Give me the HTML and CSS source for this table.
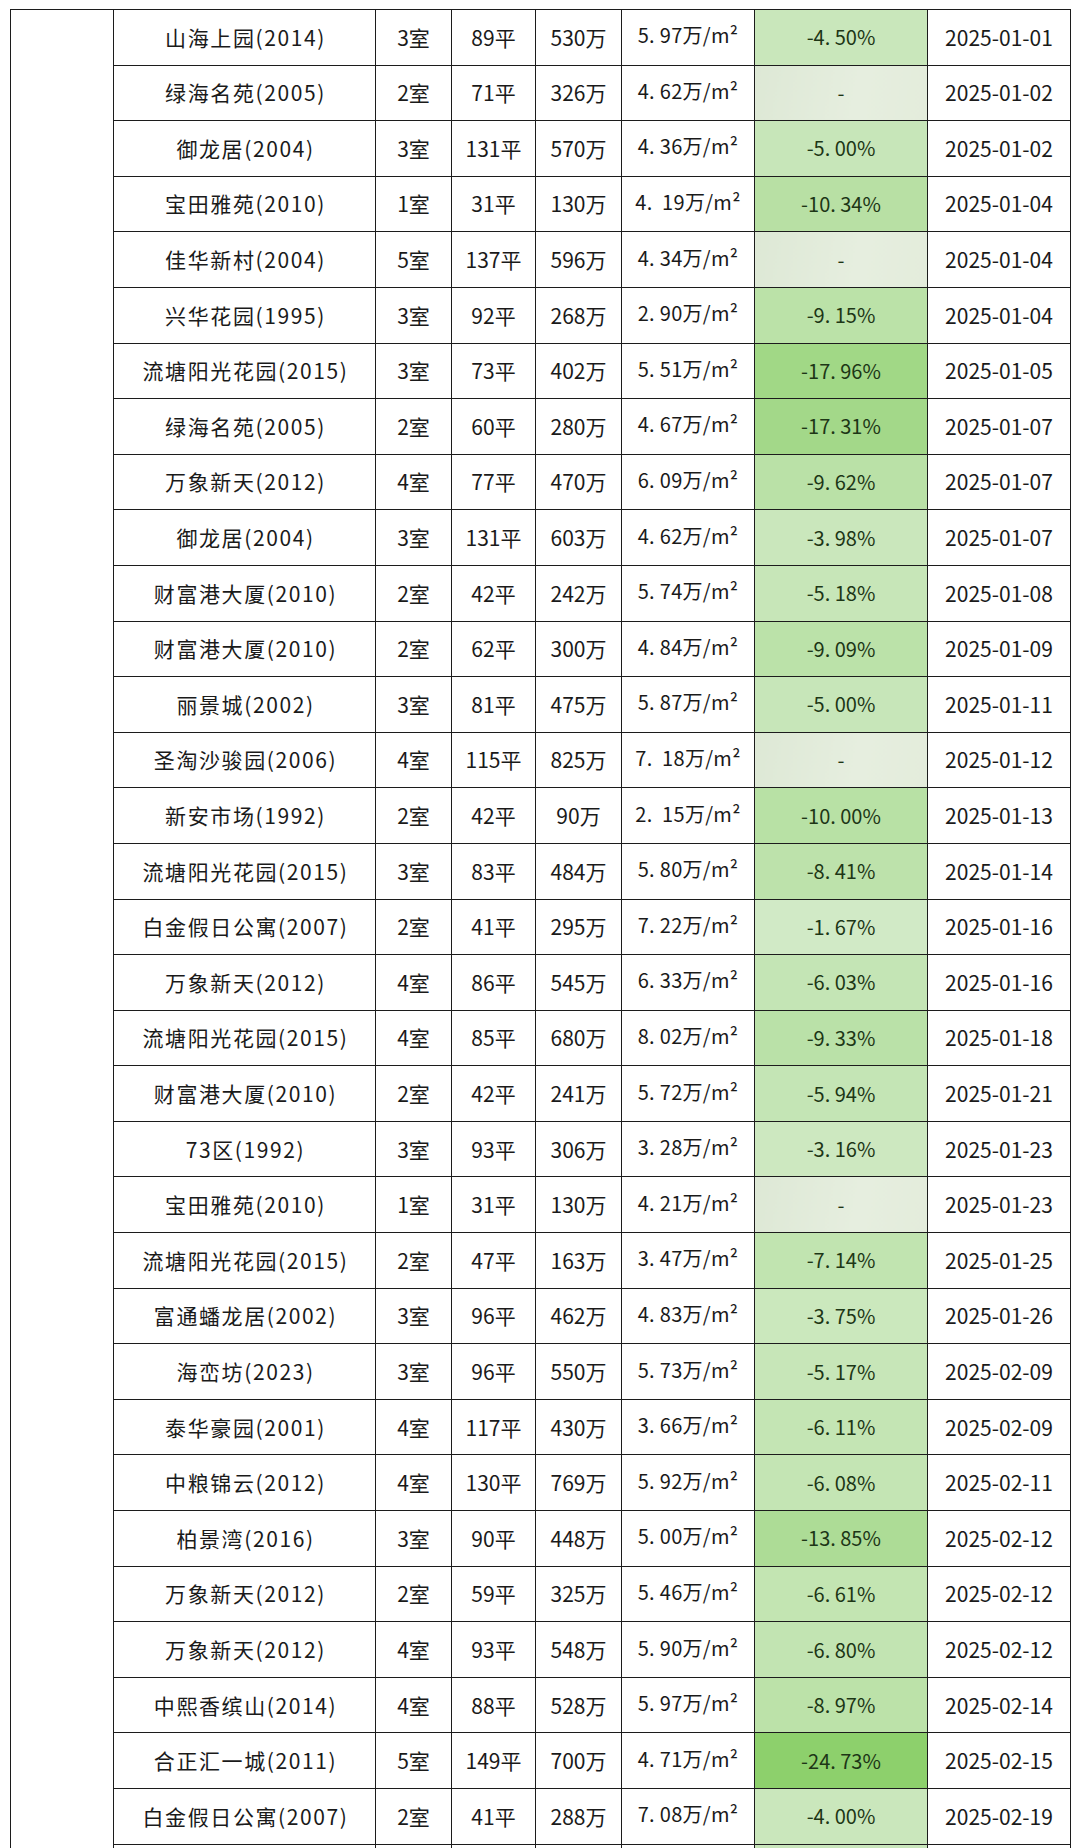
FILE: index.html
```html
<!DOCTYPE html>
<html lang="zh-CN">
<head>
<meta charset="utf-8">
<title>成交记录</title>
<link rel="stylesheet" href="styles.css">
</head>
<body>
<div class="page">
<table class="deals">
<colgroup>
<col class="c-side"><col class="c-name"><col class="c-room"><col class="c-area"><col class="c-price"><col class="c-unit"><col class="c-chg"><col class="c-date">
</colgroup>
<tbody>
<tr><td class="side" rowspan="34"></td><td class="name">山海上园(2014)</td><td>3室</td><td>89平</td><td>530万</td><td class="unit">5. 97万/m²</td><td class="chg" style="background:rgb(201,231,187)">-4. 50%</td><td>2025-01-01</td></tr>
<tr><td class="name">绿海名苑(2005)</td><td>2室</td><td>71平</td><td>326万</td><td class="unit">4. 62万/m²</td><td class="chg na">-</td><td>2025-01-02</td></tr>
<tr><td class="name">御龙居(2004)</td><td>3室</td><td>131平</td><td>570万</td><td class="unit">4. 36万/m²</td><td class="chg" style="background:rgb(199,230,185)">-5. 00%</td><td>2025-01-02</td></tr>
<tr><td class="name">宝田雅苑(2010)</td><td>1室</td><td>31平</td><td>130万</td><td class="unit">4.&nbsp; 19万/m²</td><td class="chg" style="background:rgb(184,224,164)">-10. 34%</td><td>2025-01-04</td></tr>
<tr><td class="name">佳华新村(2004)</td><td>5室</td><td>137平</td><td>596万</td><td class="unit">4. 34万/m²</td><td class="chg na">-</td><td>2025-01-04</td></tr>
<tr><td class="name">兴华花园(1995)</td><td>3室</td><td>92平</td><td>268万</td><td class="unit">2. 90万/m²</td><td class="chg" style="background:rgb(187,226,168)">-9. 15%</td><td>2025-01-04</td></tr>
<tr><td class="name">流塘阳光花园(2015)</td><td>3室</td><td>73平</td><td>402万</td><td class="unit">5. 51万/m²</td><td class="chg" style="background:rgb(161,216,134)">-17. 96%</td><td>2025-01-05</td></tr>
<tr><td class="name">绿海名苑(2005)</td><td>2室</td><td>60平</td><td>280万</td><td class="unit">4. 67万/m²</td><td class="chg" style="background:rgb(163,216,137)">-17. 31%</td><td>2025-01-07</td></tr>
<tr><td class="name">万象新天(2012)</td><td>4室</td><td>77平</td><td>470万</td><td class="unit">6. 09万/m²</td><td class="chg" style="background:rgb(186,225,167)">-9. 62%</td><td>2025-01-07</td></tr>
<tr><td class="name">御龙居(2004)</td><td>3室</td><td>131平</td><td>603万</td><td class="unit">4. 62万/m²</td><td class="chg" style="background:rgb(202,231,188)">-3. 98%</td><td>2025-01-07</td></tr>
<tr><td class="name">财富港大厦(2010)</td><td>2室</td><td>42平</td><td>242万</td><td class="unit">5. 74万/m²</td><td class="chg" style="background:rgb(199,230,184)">-5. 18%</td><td>2025-01-08</td></tr>
<tr><td class="name">财富港大厦(2010)</td><td>2室</td><td>62平</td><td>300万</td><td class="unit">4. 84万/m²</td><td class="chg" style="background:rgb(187,226,169)">-9. 09%</td><td>2025-01-09</td></tr>
<tr><td class="name">丽景城(2002)</td><td>3室</td><td>81平</td><td>475万</td><td class="unit">5. 87万/m²</td><td class="chg" style="background:rgb(199,230,185)">-5. 00%</td><td>2025-01-11</td></tr>
<tr><td class="name">圣淘沙骏园(2006)</td><td>4室</td><td>115平</td><td>825万</td><td class="unit">7.&nbsp; 18万/m²</td><td class="chg na">-</td><td>2025-01-12</td></tr>
<tr><td class="name">新安市场(1992)</td><td>2室</td><td>42平</td><td>90万</td><td class="unit">2.&nbsp; 15万/m²</td><td class="chg" style="background:rgb(184,225,165)">-10. 00%</td><td>2025-01-13</td></tr>
<tr><td class="name">流塘阳光花园(2015)</td><td>3室</td><td>83平</td><td>484万</td><td class="unit">5. 80万/m²</td><td class="chg" style="background:rgb(189,226,171)">-8. 41%</td><td>2025-01-14</td></tr>
<tr><td class="name">白金假日公寓(2007)</td><td>2室</td><td>41平</td><td>295万</td><td class="unit">7. 22万/m²</td><td class="chg" style="background:rgb(209,234,198)">-1. 67%</td><td>2025-01-16</td></tr>
<tr><td class="name">万象新天(2012)</td><td>4室</td><td>86平</td><td>545万</td><td class="unit">6. 33万/m²</td><td class="chg" style="background:rgb(196,229,181)">-6. 03%</td><td>2025-01-16</td></tr>
<tr><td class="name">流塘阳光花园(2015)</td><td>4室</td><td>85平</td><td>680万</td><td class="unit">8. 02万/m²</td><td class="chg" style="background:rgb(186,225,168)">-9. 33%</td><td>2025-01-18</td></tr>
<tr><td class="name">财富港大厦(2010)</td><td>2室</td><td>42平</td><td>241万</td><td class="unit">5. 72万/m²</td><td class="chg" style="background:rgb(196,229,181)">-5. 94%</td><td>2025-01-21</td></tr>
<tr><td class="name">73区(1992)</td><td>3室</td><td>93平</td><td>306万</td><td class="unit">3. 28万/m²</td><td class="chg" style="background:rgb(205,232,192)">-3. 16%</td><td>2025-01-23</td></tr>
<tr><td class="name">宝田雅苑(2010)</td><td>1室</td><td>31平</td><td>130万</td><td class="unit">4. 21万/m²</td><td class="chg na">-</td><td>2025-01-23</td></tr>
<tr><td class="name">流塘阳光花园(2015)</td><td>2室</td><td>47平</td><td>163万</td><td class="unit">3. 47万/m²</td><td class="chg" style="background:rgb(193,228,176)">-7. 14%</td><td>2025-01-25</td></tr>
<tr><td class="name">富通蟠龙居(2002)</td><td>3室</td><td>96平</td><td>462万</td><td class="unit">4. 83万/m²</td><td class="chg" style="background:rgb(203,232,189)">-3. 75%</td><td>2025-01-26</td></tr>
<tr><td class="name">海峦坊(2023)</td><td>3室</td><td>96平</td><td>550万</td><td class="unit">5. 73万/m²</td><td class="chg" style="background:rgb(199,230,184)">-5. 17%</td><td>2025-02-09</td></tr>
<tr><td class="name">泰华豪园(2001)</td><td>4室</td><td>117平</td><td>430万</td><td class="unit">3. 66万/m²</td><td class="chg" style="background:rgb(196,229,180)">-6. 11%</td><td>2025-02-09</td></tr>
<tr><td class="name">中粮锦云(2012)</td><td>4室</td><td>130平</td><td>769万</td><td class="unit">5. 92万/m²</td><td class="chg" style="background:rgb(196,229,180)">-6. 08%</td><td>2025-02-11</td></tr>
<tr><td class="name">柏景湾(2016)</td><td>3室</td><td>90平</td><td>448万</td><td class="unit">5. 00万/m²</td><td class="chg" style="background:rgb(173,220,150)">-13. 85%</td><td>2025-02-12</td></tr>
<tr><td class="name">万象新天(2012)</td><td>2室</td><td>59平</td><td>325万</td><td class="unit">5. 46万/m²</td><td class="chg" style="background:rgb(195,229,178)">-6. 61%</td><td>2025-02-12</td></tr>
<tr><td class="name">万象新天(2012)</td><td>4室</td><td>93平</td><td>548万</td><td class="unit">5. 90万/m²</td><td class="chg" style="background:rgb(194,228,178)">-6. 80%</td><td>2025-02-12</td></tr>
<tr><td class="name">中熙香缤山(2014)</td><td>4室</td><td>88平</td><td>528万</td><td class="unit">5. 97万/m²</td><td class="chg" style="background:rgb(188,226,169)">-8. 97%</td><td>2025-02-14</td></tr>
<tr><td class="name">合正汇一城(2011)</td><td>5室</td><td>149平</td><td>700万</td><td class="unit">4. 71万/m²</td><td class="chg" style="background:rgb(141,208,108)">-24. 73%</td><td>2025-02-15</td></tr>
<tr><td class="name">白金假日公寓(2007)</td><td>2室</td><td>41平</td><td>288万</td><td class="unit">7. 08万/m²</td><td class="chg" style="background:rgb(202,231,188)">-4. 00%</td><td>2025-02-19</td></tr>
<tr class="cut"><td></td><td></td><td></td><td></td><td></td><td class="chg" style="background:rgb(200,230,186)"></td><td></td></tr>
</tbody>
</table>
</div>
</body>
</html>
```
FILE: styles.css
```css
html, body {
  margin: 0;
  padding: 0;
  background: #ffffff;
  height: 1848px;
  overflow: hidden;
}

.page {
  padding: 9px 0 0 10px;
}

.deals {
  border-collapse: collapse;
  table-layout: fixed;
  width: 1060px;
  font-family: "Noto Sans CJK SC", "Noto Sans", sans-serif;
  font-size: 21px;
  color: #1a1a1a;
}

.c-side { width: 103px; }
.c-name { width: 262px; }
.c-room { width: 76px; }
.c-area { width: 84px; }
.c-price { width: 86px; }
.c-unit { width: 133px; }
.c-chg { width: 173px; }
.c-date { width: 143px; }

.deals tr {
  height: 55.6px;
}

.deals td {
  border: 1px solid #1c1c1c;
  padding: 0;
  text-align: center;
  vertical-align: middle;
  white-space: pre;
  line-height: 1.2;
}

.deals td.side {
  vertical-align: top;
}

.deals td.name {
  letter-spacing: 1.6px;
  padding-left: 2px;
}

.deals td.unit {
  font-size: 20px;
  letter-spacing: 0.3px;
  padding-bottom: 4px;
}

.deals td.chg {
  font-size: 20px;
  color: #1d3616;
}

.deals td.na {
  background: linear-gradient(100deg, #dde8d5 0%, #e6eedf 60%, #e3ecdb 100%);
}
```
